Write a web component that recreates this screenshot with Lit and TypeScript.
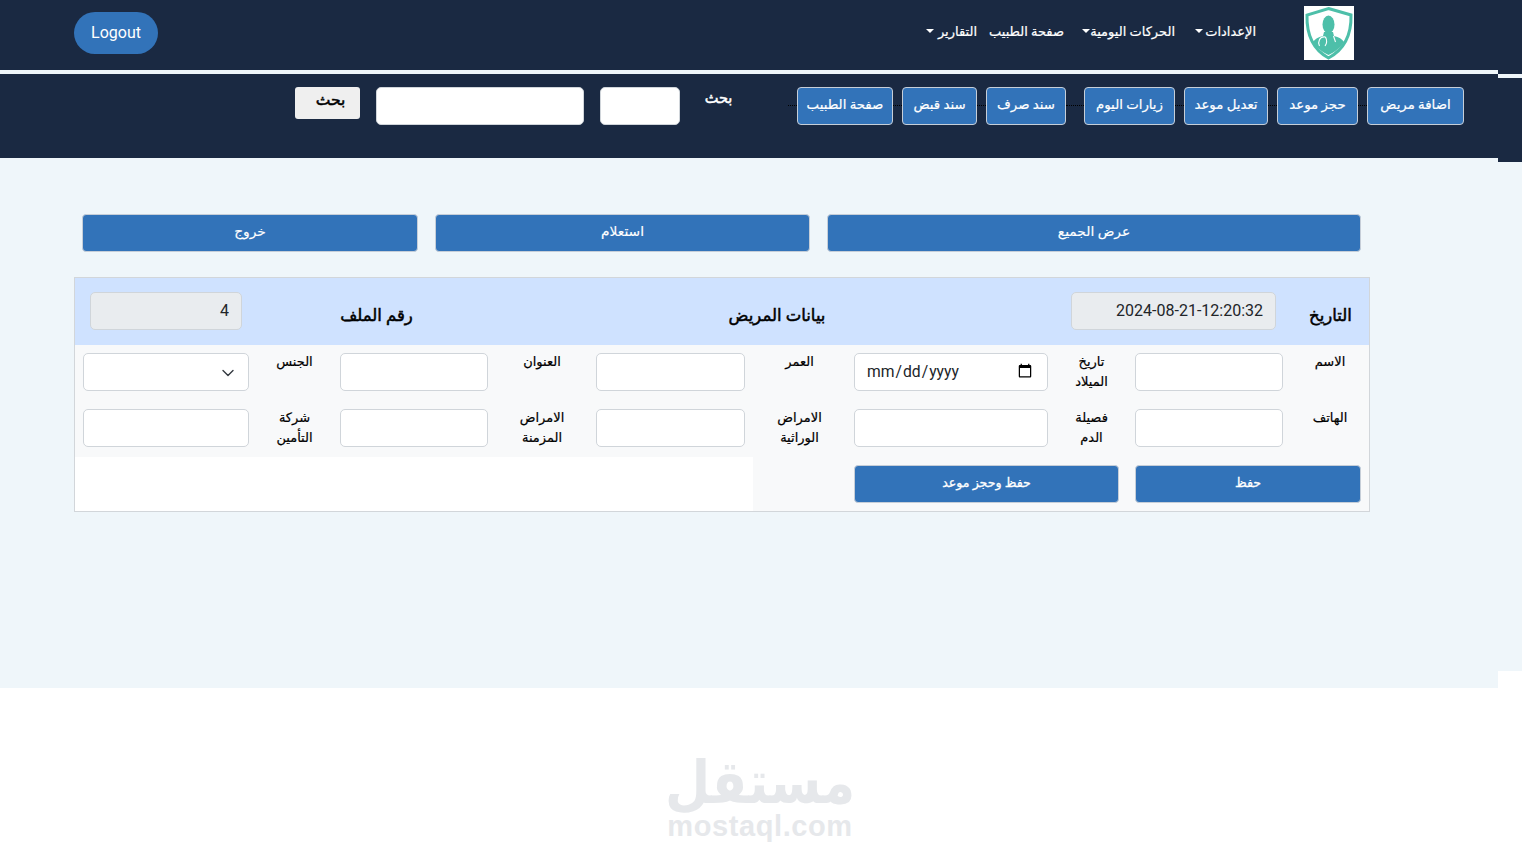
import { LitElement, html, css, svg } from "lit";
import { customElement } from "lit/decorators.js";

const barButtons: [string, number][] = [
  ["اضافة مريض", 97],
  ["حجز موعد", 81],
  ["تعديل موعد", 84],
  ["زيارات اليوم", 91],
  ["سند صرف", 80],
  ["سند قبض", 75],
  ["صفحة الطبيب", 96],
];
const barGaps = [9, 9, 9, 18, 9, 9, 9];

const shield = svg`
  <path d="M24.5 2.5 L47 9 C47.5 28 41 43 24.5 52 C8 43 2.5 28 3 9 Z" fill="none" stroke="#4dbfa9" stroke-width="3" stroke-linejoin="miter"/>
  <ellipse cx="24.5" cy="18.5" rx="6" ry="9" fill="#4dbfa9"/>
  <path d="M20 26 L29 26 L30 30 C35 31 38 33 40 36 C37 41 31 46 24.5 49 C18 46 12 41 9 36 C11 33 14 31 19 30 Z" fill="#4dbfa9"/>
  <path d="M21.5 31 C15.5 30 13.5 36 15.5 40 M21.5 31 C23.5 35 22.5 38 21 40" fill="none" stroke="#fff" stroke-width="1.1"/>
  <path d="M29.5 30 L31.5 36" fill="none" stroke="#fff" stroke-width="1.1"/>
`;

@customElement("app-root")
export class AppRoot extends LitElement {
  static styles = css`
    :host {
      display: block;
      width: 1522px;
      height: 858px;
      overflow: hidden;
      background: #fff;
      position: relative;
      font-family: Roboto, "Liberation Sans", "DejaVu Sans", sans-serif;
      color: #000;
    }
    * { box-sizing: border-box; }
    .page { display: flex; align-items: flex-start; }
    .main { width: 1498px; flex: none; }
    .edge { width: 24px; flex: none; }
    .edge-a { height: 74px; background: #1a2942; }
    .edge-b { height: 4px; background: #eff6fa; }
    .edge-c { height: 84px; background: #1a2942; }
    .edge-d { height: 509px; background: #eff6fa; }

    .nav {
      height: 70px;
      background: #1a2942;
      display: flex;
      align-items: center;
      direction: rtl;
      padding-right: 144px;
    }
    .logo { width: 50px; height: 54px; background: #fff; display: block; margin-top: -4px; flex: none; }
    .menu { display: flex; align-items: center; margin-right: 48px; margin-top: -8px; color: #fff; font-size: 13px; -webkit-text-stroke: 0.2px #fff; }
    .menu span { white-space: nowrap; display: flex; align-items: center; }
    .m1 { width: 61px; margin-left: 20px; }
    .m2 { width: 92px; margin-left: 19px; }
    .m3 { width: 70px; margin-left: 17px; }
    .m4 { width: 51px; }
    .caret { width: 0; height: 0; border-top: 4px solid #fff; border-left: 4px solid transparent; border-right: 4px solid transparent; margin-right: auto; flex: none; }
    .logout {
      margin-right: auto;
      margin-left: 74px;
      margin-top: -4px;
      width: 84px;
      height: 42px;
      border-radius: 21px;
      border: none;
      background: #3273b9;
      color: #fff;
      font: 16px Roboto, sans-serif;
      padding: 0 0 2px;
    }
    .sep { height: 4px; background: #eff6fa; }
    .bar {
      height: 84px;
      background: #1a2942;
      display: flex;
      align-items: flex-start;
      direction: rtl;
      padding: 13px 34px 0 0;
    }
    .bar-btn {
      height: 38px;
      flex: none;
      background: #3273b9;
      color: #fff;
      border: 1px solid #c6ced8;
      border-radius: 4px;
      font: 13.3px Roboto, "DejaVu Sans", sans-serif;
      -webkit-text-stroke: 0.2px #fff;
      padding: 0 0 4px;
    }
    .dots { flex: none; height: 1px; margin-top: 18px; border-top: 1px dotted #000; }
    .search-label { width: 29px; margin-right: 55px; color: #fff; font-size: 14.5px; -webkit-text-stroke: 0.5px #fff; line-height: 24px; flex: none; text-align: center; }
    .field {
      height: 38px;
      background: #fff;
      border: 1px solid #d0d5da;
      border-radius: 5px;
      padding: 6px 12px;
      font: 16px Roboto, sans-serif;
      color: #212529;
      display: block;
      width: 100%;
      outline: none;
    }
    .s1 { width: 80px; margin-right: 24px; flex: none; }
    .s2 { width: 208px; margin-right: 16px; flex: none; }
    .search-btn {
      width: 65px;
      height: 32px;
      margin-right: 16px;
      background: #efefef;
      border: none;
      border-radius: 3px;
      color: #000;
      font-size: 15.5px;
      -webkit-text-stroke: 0.5px #000;
      font-family: Roboto, "DejaVu Sans", sans-serif;
      padding: 0 0 6px 6px;
      flex: none;
    }
    .content { height: 530px; background: #eff6fa; padding-top: 56px; }
    .actions {
      display: grid;
      grid-template-columns: 534px 375px 336px;
      gap: 17px;
      direction: rtl;
      padding-right: 137px;
      margin-bottom: 25px;
    }
    .btn {
      height: 38px;
      background: #3273b9;
      color: #fff;
      border: 1px solid #c6ced8;
      border-radius: 4px;
      font: 13.8px Roboto, "DejaVu Sans", sans-serif;
      -webkit-text-stroke: 0.15px #fff;
      padding: 0 0 4px;
      width: 100%;
    }
    .btn.sm { font-size: 12.6px; -webkit-text-stroke: 0.3px #fff; padding-bottom: 4px; }
    .card {
      width: 1296px;
      height: 235px;
      margin-left: 74px;
      border: 1px solid #d2d6da;
      background: #fff;
      direction: rtl;
    }
    .head {
      height: 67px;
      background: #cfe2ff;
      display: grid;
      grid-template-columns: 93px 205px 588px 241px 152px;
      padding-top: 14px;
    }
    .head-t { font-size: 16.5px; -webkit-text-stroke: 0.5px #000; text-align: center; line-height: 24px; padding-top: 12px; }
    .head-t.first { transform: translateX(8px); }
    .head-t.nd { padding-left: 28px; }
    .ro { background: #e9ecef; direction: ltr; text-align: right; color: #212529; padding-bottom: 8px; }
    .form {
      display: grid;
      grid-template-columns: 78px 164px 71px 210px 93px 165px 92px 164px 75px 182px;
      grid-template-rows: 56px 56px 54px;
    }
    .lab {
      background: #f8f9fa;
      font-size: 13px;
      -webkit-text-stroke: 0.2px #000;
      line-height: 20px;
      padding: 7px 8px 0;
      text-align: center;
    }
    .cell { background: #f8f9fa; padding: 8px; }
    .wide { grid-column: span 2; }
    select.field { appearance: none; }
    .sel { position: relative; }
    .chev { position: absolute; left: 147px; top: 23px; width: 12px; height: 10px; pointer-events: none; }
    .date { direction: ltr; font-size: 15.7px; color: #212529; padding: 0 12px 2px 11px; }
    .wm {
      position: absolute;
      left: 640px;
      top: 760px;
      width: 240px;
      text-align: center;
      color: #e6e8eb;
      pointer-events: none;
    }
    .wm-ar { font: 700 52px/52px "DejaVu Sans", sans-serif; height: 52px; direction: rtl; transform: scaleY(1.15); transform-origin: bottom; }
    .wm-en { font: 700 29px/28px "Liberation Sans", sans-serif; letter-spacing: 0.6px; height: 28px; }
  `;

  render() {
    const items: unknown[] = [];
    barButtons.forEach(([t, w], i) => {
      items.push(html`<button class="bar-btn" style="width:${w}px">${t}</button>`);
      items.push(html`<div class="dots" style="width:${barGaps[i]}px"></div>`);
    });
    return html`
      <div class="page">
        <div class="main">
          <div class="nav">
            <svg class="logo" viewBox="0 0 50 54">${shield}</svg>
            <div class="menu">
              <span class="m1">الإعدادات<i class="caret"></i></span>
              <span class="m2">الحركات اليومية<i class="caret"></i></span>
              <span class="m3">صفحة الطبيب</span>
              <span class="m4">التقارير<i class="caret"></i></span>
            </div>
            <button class="logout">Logout</button>
          </div>
          <div class="sep"></div>
          <div class="bar">
            ${items}
            <div class="search-label">بحث</div>
            <input class="field s1" />
            <input class="field s2" />
            <button class="search-btn">بحث</button>
          </div>
          <div class="content">
            <div class="actions">
              <button class="btn">عرض الجميع</button>
              <button class="btn">استعلام</button>
              <button class="btn">خروج</button>
            </div>
            <div class="card">
              <div class="head">
                <div class="head-t first">التاريخ</div>
                <div><input class="field ro" disabled value="2024-08-21-12:20:32" /></div>
                <div class="head-t">بيانات المريض</div>
                <div class="head-t nd">رقم الملف</div>
                <div><input class="field ro" disabled value="4" /></div>
              </div>
              <div class="form">
                <div class="lab">الاسم</div>
                <div class="cell"><input class="field" /></div>
                <div class="lab">تاريخ الميلاد</div>
                <div class="cell"><input class="field date" type="date" /></div>
                <div class="lab">العمر</div>
                <div class="cell"><input class="field" /></div>
                <div class="lab">العنوان</div>
                <div class="cell"><input class="field" /></div>
                <div class="lab">الجنس</div>
                <div class="cell sel">
                  <select class="field"><option></option></select>
                  <svg class="chev" viewBox="0 0 12 10"><path d="M1 2.5l5 5 5-5" fill="none" stroke="#343a40" stroke-width="1.4" stroke-linecap="round" stroke-linejoin="round"/></svg>
                </div>

                <div class="lab">الهاتف</div>
                <div class="cell"><input class="field" /></div>
                <div class="lab">فصيلة الدم</div>
                <div class="cell"><input class="field" /></div>
                <div class="lab">الامراض الوراثية</div>
                <div class="cell"><input class="field" /></div>
                <div class="lab">الامراض المزمنة</div>
                <div class="cell"><input class="field" /></div>
                <div class="lab">شركة التأمين</div>
                <div class="cell"><input class="field" /></div>

                <div class="cell wide"><button class="btn sm">حفظ</button></div>
                <div class="cell wide"><button class="btn sm">حفظ وحجز موعد</button></div>
                <div class="cell"></div>
              </div>
            </div>
          </div>
        </div>
        <div class="edge">
          <div class="edge-a"></div>
          <div class="edge-b"></div>
          <div class="edge-c"></div>
          <div class="edge-d"></div>
        </div>
      </div>
      <div class="wm">
        <div class="wm-ar">مستقل</div>
        <div class="wm-en">mostaql.com</div>
      </div>
    `;
  }
}
